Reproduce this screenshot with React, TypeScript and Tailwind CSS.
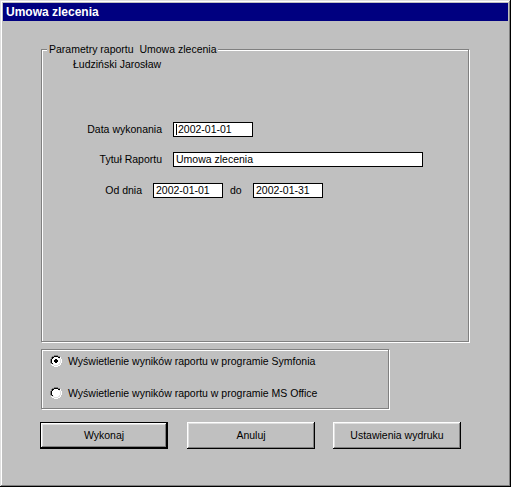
import React from 'react'

const FONT = "font-['Liberation_Sans',Arial,sans-serif]"

const RADIO_PIXELS = [
  '....GGGG....',
  '..GGKKKKGG..',
  '.GKKWWWWKKW.',
  '.GKWWWWWWLW.',
  'GKWWWWWWWWLW',
  'GKWWWWWWWWLW',
  'GKWWWWWWWWLW',
  'GKWWWWWWWWLW',
  '.GKWWWWWWLW.',
  '.WLLWWWWLLW.',
  '..WWLLLLWW..',
  '....WWWW....',
]

const DOT_PIXELS = ['....', '.XX.', 'XXXX', 'XXXX', '.XX.']

const PIXEL_COLORS: Record<string, string> = {
  G: '#808080',
  K: '#000000',
  W: '#ffffff',
  L: '#dfdfdf',
}

function TextBox({ value, width, caret }: { value: string; width: string; caret?: boolean }) {
  return (
    <div className={`${width} flex h-[15px] items-center border border-black bg-white pl-[2px] text-black`}>
      {caret && <span className="mr-px inline-block h-[11px] w-px bg-black" />}
      {value}
    </div>
  )
}

function Radio({ checked }: { checked?: boolean }) {
  return (
    <svg width="12" height="12" viewBox="0 0 12 12" className="shrink-0" shapeRendering="crispEdges">
      {RADIO_PIXELS.flatMap((row, y) =>
        row.split('').map((c, x) =>
          c === '.' ? null : <rect key={`${x}-${y}`} x={x} y={y} width="1" height="1" fill={PIXEL_COLORS[c]} />
        )
      )}
      {checked &&
        DOT_PIXELS.flatMap((row, y) =>
          row.split('').map((c, x) =>
            c === 'X' ? <rect key={`d${x}-${y}`} x={x + 4} y={y + 3} width="1" height="1" fill="#000" /> : null
          )
        )}
    </svg>
  )
}

function Button({ label, isDefault }: { label: string; isDefault?: boolean }) {
  return (
    <div className={`h-[27px] w-[128px] ${isDefault ? 'border border-black' : ''}`}>
      <div className="flex h-full w-full items-center justify-center text-black shadow-[inset_-1px_-1px_#000,inset_1px_1px_#fff,inset_-2px_-2px_#808080,inset_2px_2px_#dfdfdf]">
        {label}
      </div>
    </div>
  )
}

export default function App() {
  return (
    <div
      className={`${FONT} h-[487px] w-[511px] bg-[#c0c0c0] p-[3px] text-[10.5px] leading-[13px] text-black shadow-[inset_-1px_-1px_#000,inset_1px_1px_#dfdfdf,inset_-2px_-2px_#808080,inset_2px_2px_#fff]`}
    >
      <div className="flex h-[18px] items-center bg-[#000080] pl-[3px] text-[12px] font-bold text-white">
        Umowa zlecenia
      </div>

      <div className="flex flex-col pl-[37px] pt-[28px]">
        {/* report parameters */}
        <div className="relative ml-px h-[293px] w-[428px] border border-[#808080] shadow-[1px_1px_0_#fff,inset_1px_1px_0_#fff]">
          <span className="absolute -top-[7px] left-[5px] whitespace-pre bg-[#c0c0c0] px-[2px]">
            Parametry raportu  Umowa zlecenia
          </span>
          <div className="pl-[31px] pt-[8px]">Łudziński Jarosław</div>

          <div className="mt-[51px] flex h-[15px] items-center">
            <div className="w-[120px] text-right">Data wykonania</div>
            <div className="ml-[11px]">
              <TextBox value="2002-01-01" width="w-[80px]" caret />
            </div>
          </div>

          <div className="mt-[15px] flex h-[15px] items-center">
            <div className="w-[120px] text-right">Tytuł Raportu</div>
            <div className="ml-[11px]">
              <TextBox value="Umowa zlecenia" width="w-[250px]" />
            </div>
          </div>

          <div className="mt-[16px] flex h-[15px] items-center">
            <div className="w-[100px] text-right">Od dnia</div>
            <div className="ml-[11px]">
              <TextBox value="2002-01-01" width="w-[70px]" />
            </div>
            <div className="ml-[7px] w-[23px]">do</div>
            <TextBox value="2002-01-31" width="w-[70px]" />
          </div>
        </div>

        {/* output target */}
        <div className="ml-px mt-[7px] h-[60px] w-[348px] border border-[#808080] shadow-[1px_1px_0_#fff,inset_1px_1px_0_#fff]">
          <div className="mt-[5px] flex h-[12px] items-center gap-[6px] pl-[8px]">
            <Radio checked />
            <span>Wyświetlenie wyników raportu w programie Symfonia</span>
          </div>
          <div className="mt-[20px] flex h-[12px] items-center gap-[6px] pl-[8px]">
            <Radio />
            <span>Wyświetlenie wyników raportu w programie MS Office</span>
          </div>
        </div>

        <div className="mt-[13px] flex">
          <Button label="Wykonaj" isDefault />
          <div className="ml-[19px]">
            <Button label="Anuluj" />
          </div>
          <div className="ml-[18px]">
            <Button label="Ustawienia wydruku" />
          </div>
        </div>
      </div>
    </div>
  )
}
